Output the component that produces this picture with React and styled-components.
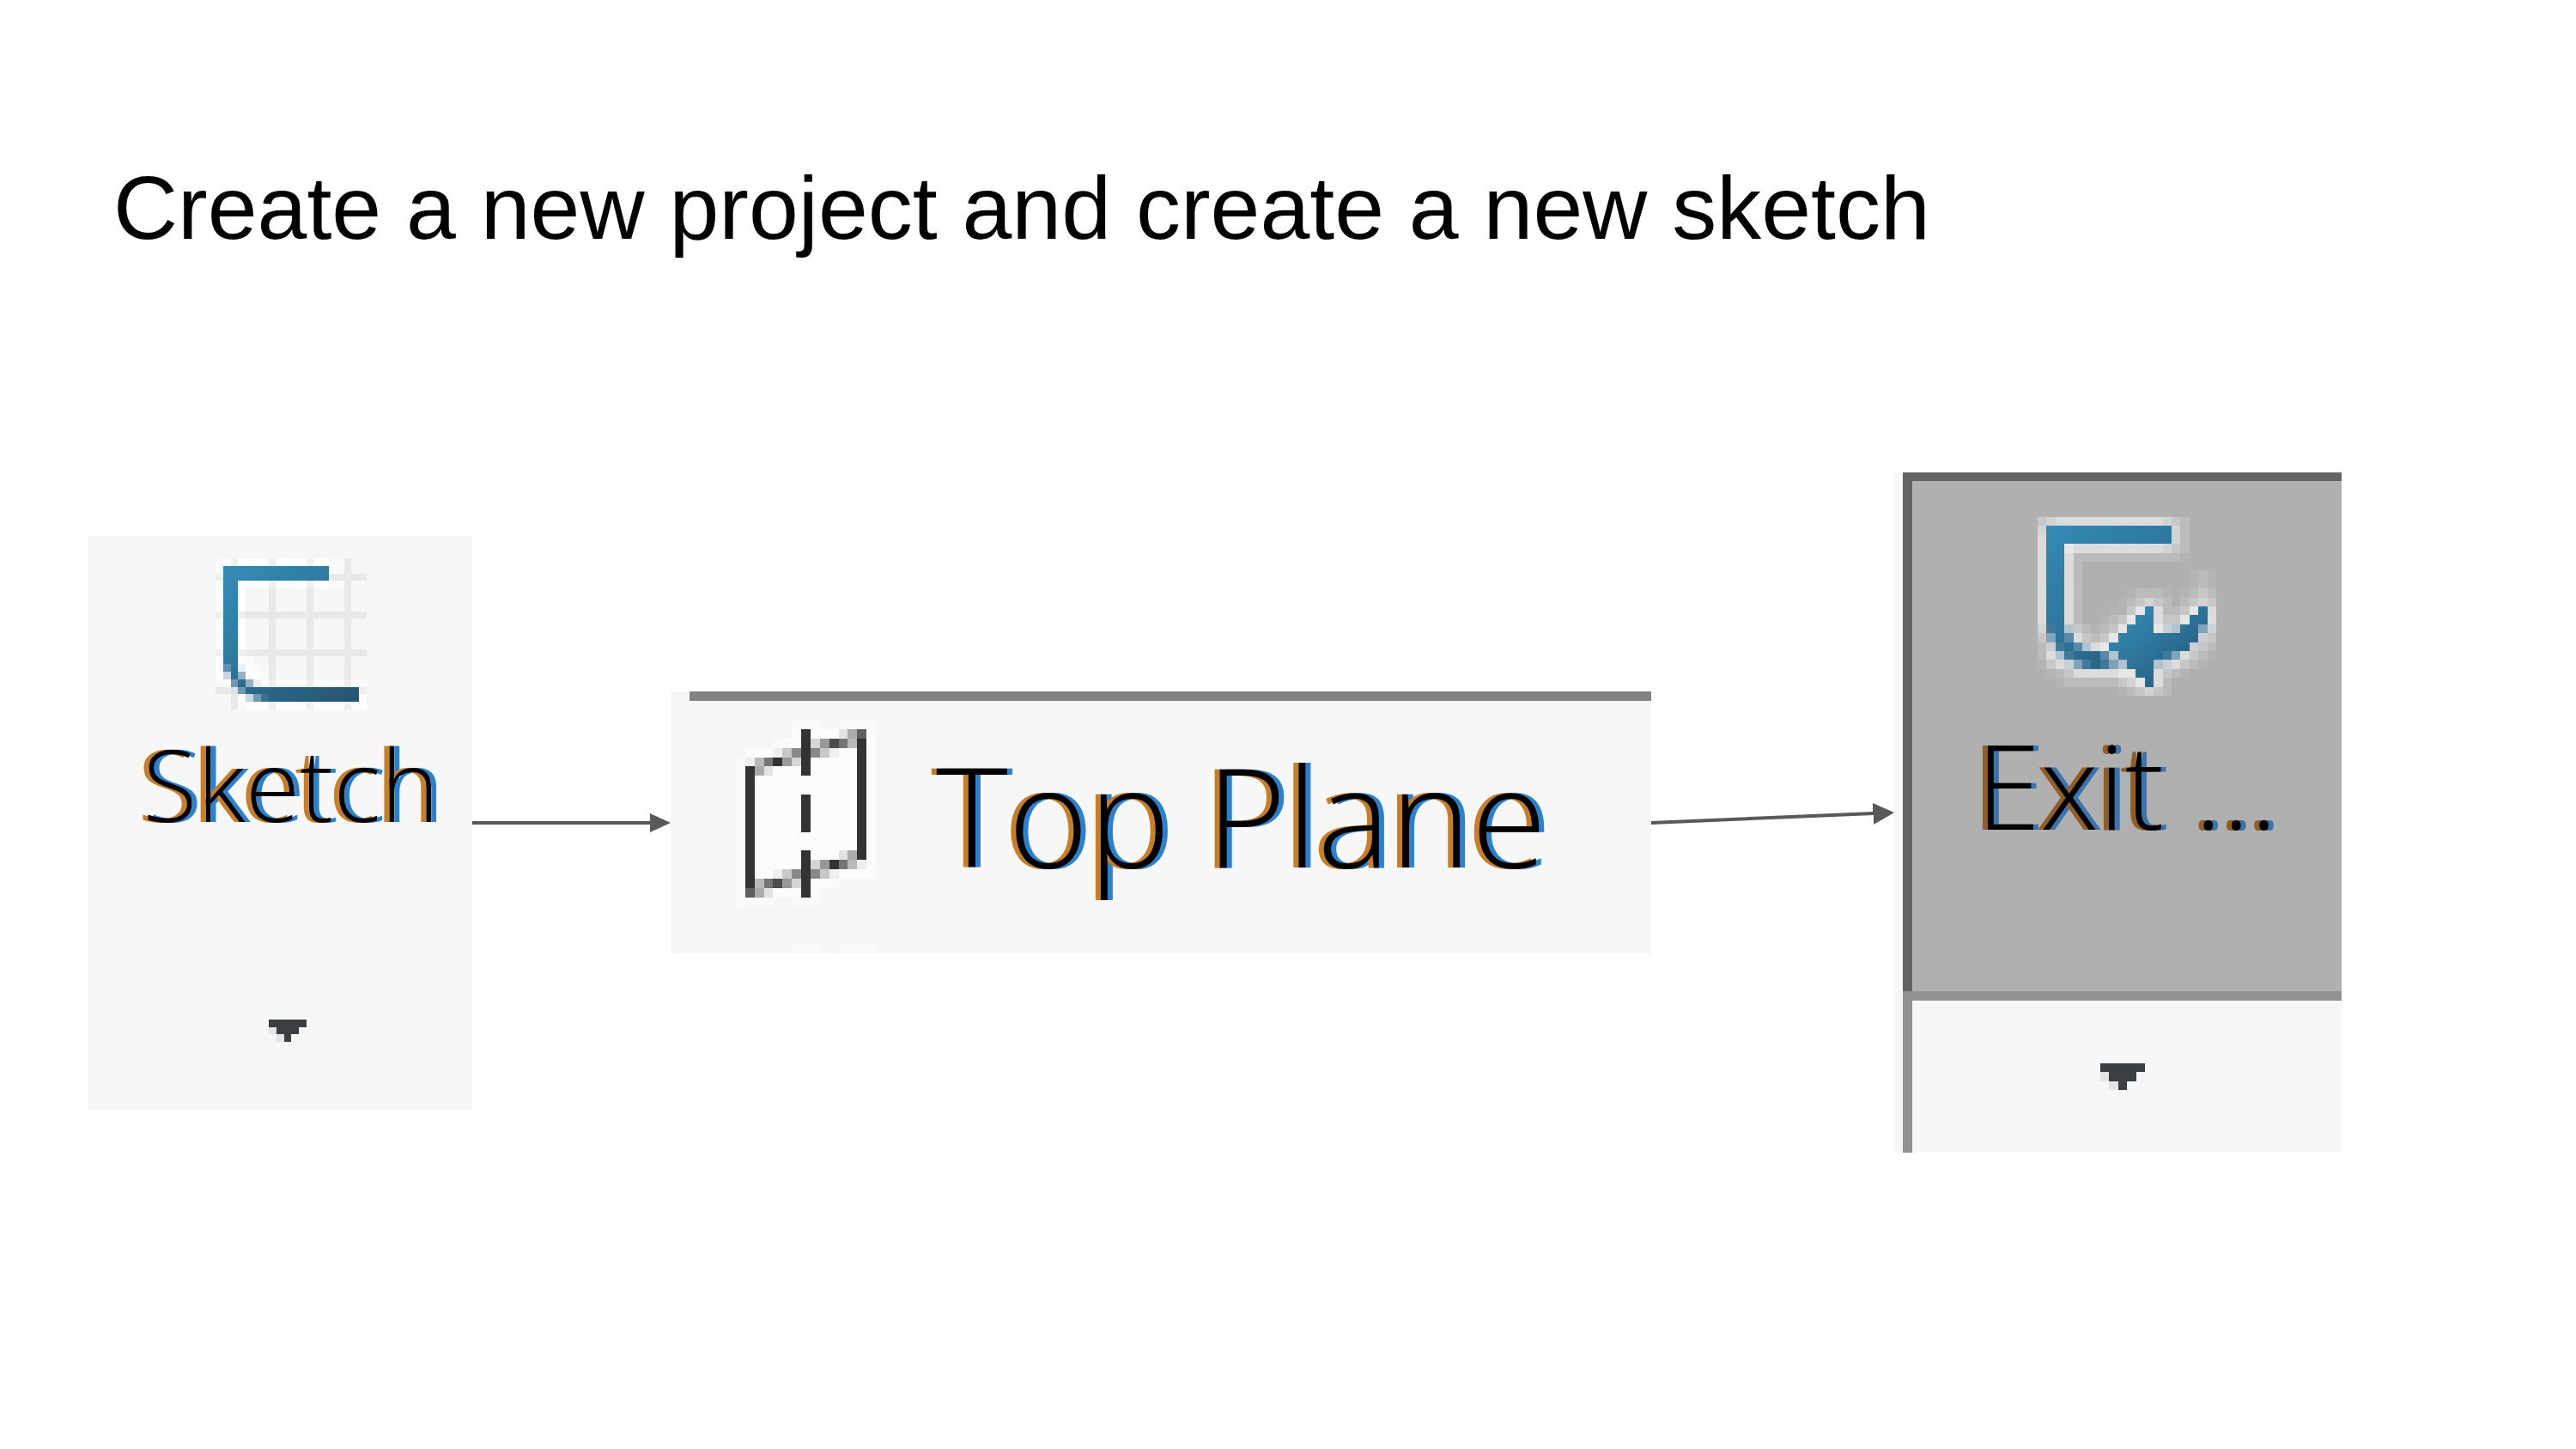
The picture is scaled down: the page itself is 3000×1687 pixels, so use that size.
import React from "react";
import styled, { createGlobalStyle } from "styled-components";

const GlobalStyle = createGlobalStyle`
  body {
    margin: 0;
    background: #ffffff;
    color: #000000;
    font-family: "Liberation Sans", Arial, sans-serif;
  }
  *, *::before, *::after {
    box-sizing: border-box;
  }
`;

const Slide = styled.main`
  padding: 182px 273px 182px 102px;
`;

const Title = styled.h1`
  margin: 0 0 248px;
  padding-left: 30px;
  font-size: 104px;
  line-height: 120px;
  font-weight: 400;
`;

const Steps = styled.div`
  display: flex;
  align-items: center;
`;

const Panel = styled.section`
  display: flex;
  flex-direction: column;
  flex: none;
  width: ${(p) => p.$width}px;
  margin-top: ${(p) => (p.$lowered ? 24 : 0)}px;
  padding-left: ${(p) => p.$inset || 0}px;
  background: #f7f7f7;
`;

const ButtonBase = styled.button`
  margin: 0;
  padding: 0;
  border: 0 solid;
  border-radius: 0;
  background: transparent;
  color: #000000;
  font-family: "Open Sans", "Noto Sans", sans-serif;
  cursor: pointer;
`;

const ToolButton = styled(ButtonBase)`
  display: flex;
  flex-direction: column;
  align-items: center;
  justify-content: flex-start;
  gap: 26px;
  height: 484px;
  padding: 26px 0 0 26px;
`;

const PressedToolButton = styled(ToolButton)`
  gap: 32px;
  height: 604px;
  padding: 42px 0 0;
  border-width: 10px 0 0 11px;
  border-color: #636363;
  background: #b0b0b0;
`;

const MenuButton = styled(ButtonBase)`
  display: flex;
  align-items: center;
  justify-content: center;
  height: 184px;
  padding-left: 18px;
`;

const FramedMenuButton = styled(MenuButton)`
  height: 188px;
  padding: 0 10px 0 0;
  border-width: 11px 0 0 11px;
  border-color: #929292;
`;

const PlaneButton = styled(ButtonBase)`
  display: flex;
  align-items: flex-start;
  gap: 70px;
  height: 306px;
  padding: 22px 0 0 54px;
  border-top-width: 11px;
  border-color: #838383;
`;

const Label = styled.span`
  padding-top: ${(p) => p.$drop || 0}px;
  font-size: ${(p) => p.$size}px;
  line-height: ${(p) => p.$line}px;
  font-weight: 300;
  white-space: nowrap;
  text-shadow: ${(p) =>
    p.$dim
      ? "-6px 0 #925e24, 6px 0 #3a74ac"
      : "-6px 0 #c87e24, 6px 0 #2c80d0"};
`;

const Connector = styled.svg`
  display: block;
  flex: ${(p) => p.$grow} 1 0;
  min-width: 0;
  margin-top: ${(p) => (p.$lowered ? 24 : 0)}px;
  fill: #595959;
  stroke: none;
`;

const Art = styled.svg`
  display: block;
  flex: none;
`;

function PixelArt({ rows, colors, width, height, children }) {
  return (
    <Art
      width={width}
      height={height}
      viewBox={`0 0 ${rows[0].length} ${rows.length}`}
      preserveAspectRatio="none"
      shapeRendering="crispEdges"
      aria-hidden="true"
    >
      {children}
      {rows.flatMap((row, y) => {
        const runs = [];
        let x = 0;
        while (x < row.length) {
          let end = x + 1;
          while (end < row.length && row[end] === row[x]) end += 1;
          if (colors[row[x]]) {
            runs.push(
              <rect key={`${x}-${y}`} x={x} y={y} width={end - x} height={1} fill={colors[row[x]]} />
            );
          }
          x = end;
        }
        return runs;
      })}
    </Art>
  );
}

const sketchRows = [
  "vwgwwwwgwwwwgwwvvG..",
  "w##############wvG..",
  "g##############GGGGG",
  "w##wwwwgwwwwgwwvvG..",
  "w##w...G....G....G..",
  "w##w...G....G....G..",
  "w##w...G....G....G..",
  "g##gGGGGGGGGGGGGGGGG",
  "w##w...G....G....G..",
  "w##w...G....G....G..",
  "w##w...G....G....G..",
  "w##w...G....G....G..",
  "g##gGGGGGGGGGGGGGGGG",
  "w##wv..G....G....G..",
  "ws#ewv.G....G....G..",
  "wp#qwwvG....G....G..",
  "vwr#qewgwwwwgwwwwgwv",
  "GGdr###############g",
  "..Gvprt############w",
  "..Gvwwwgwwwwgwwwwgww",
];

const sketchColors = {
  "#": "url(#sketchStroke)",
  w: "#fefefe",
  v: "#fafafa",
  g: "#efefef",
  G: "#e9e9e9",
  s: "#5b8fab",
  p: "#c8d8e2",
  q: "#93b1c4",
  r: "#6f98b1",
  e: "#eaf0f3",
  d: "#dde3e7",
  t: "#3b7190",
};

const exitRows = [
  "cdeeeeeeeeeeeedcb...",
  "d##############db...",
  "e##############db...",
  "e##feeeeeeeeeedcb...",
  "e##ebbbbbbbbbbbba...",
  "e##eb...............",
  "e##eb............aba",
  "e##eb............aba",
  "e##eb.....abbba.abcb",
  "e##eb....abcdcb.bcdc",
  "e##eb...aacf@ebbcf@e",
  "e##eb..abcf@@eccf@@e",
  "dt#qcbabcf@@@fpq@@rd",
  "cr#secbcf@@@@@@@@@pc",
  "bpt#sqef@@@@@@@@@pcb",
  "beqt###sq@@@@@trecba",
  "aceprt#trq@@@qpecba.",
  ".abceeeeeff@@ecba...",
  "..abbbbbbcdf@eb.....",
  ".........abcdcb.....",
];

const exitColors = {
  "#": "url(#exitStroke)",
  "@": "url(#exitArrow)",
  a: "#b4b4b4",
  b: "#bbbbbb",
  c: "#c7c7c7",
  d: "#d3d3d3",
  e: "#dcdcdc",
  f: "#e6e6e6",
  p: "#c8d0d6",
  q: "#b0c4d0",
  r: "#7fa4b9",
  s: "#5c8aa6",
  t: "#41799a",
};

const planeRows = [
  "......vvv..vvvv",
  "......wKwww951w",
  "....vwwK84k26Kw",
  ".vww073K370wwKw",
  "v062K48KwwwwwKw",
  "vK59wwwKwwwwwKw",
  "vKwwwwwwwwwwwKw",
  "vKwwwwwwwwwwwKw",
  "vKwwwwwKwwwwwKw",
  "vKwwwwwKwwwwwKw",
  "vKwwwwwKwwwwwKw",
  "vKwwwwwKwwwwwKw",
  "vKwwwwwwwwwwwKw",
  "vKwwwwwwwwwwwKw",
  "vKwwwwwKwww95Kw",
  "vKwwwwwK84K260w",
  "vKww073K370wwww",
  "vK62k48Kwwv....",
  "v159wwwKw......",
  "vvvv..vvv......",
  "...............",
  "...............",
  "...............",
  "...............",
  "......vvv..vvvv",
];

const planeColors = {
  K: "#333333",
  k: "#4c4c4c",
  1: "#5f5f5f",
  2: "#757575",
  3: "#888888",
  4: "#999999",
  5: "#ababab",
  6: "#b9b9b9",
  7: "#c8c8c8",
  8: "#d5d5d5",
  9: "#e2e2e2",
  0: "#efefef",
  w: "#fcfcfc",
  v: "#fafafa",
};

const caretRows = ["KKKKK", "lKKK.", ".lK.."];
const caretColors = { K: "#3b3f42", l: "#e3e5e4" };

function SketchIcon() {
  return (
    <PixelArt rows={sketchRows} colors={sketchColors} width={176} height={176}>
      <defs>
        <linearGradient id="sketchStroke" gradientUnits="userSpaceOnUse" x1="2" y1="2" x2="17" y2="20">
          <stop offset="0" stopColor="#348ab3" />
          <stop offset="0.3" stopColor="#2f7ea6" />
          <stop offset="0.6" stopColor="#2a6788" />
          <stop offset="1" stopColor="#275673" />
        </linearGradient>
      </defs>
    </PixelArt>
  );
}

function ExitIcon() {
  return (
    <PixelArt rows={exitRows} colors={exitColors} width={208} height={208}>
      <defs>
        <linearGradient id="exitStroke" gradientUnits="userSpaceOnUse" x1="1" y1="1" x2="12" y2="15">
          <stop offset="0" stopColor="#348ab3" />
          <stop offset="0.5" stopColor="#2e79a1" />
          <stop offset="1" stopColor="#296080" />
        </linearGradient>
        <linearGradient id="exitArrow" gradientUnits="userSpaceOnUse" x1="10" y1="11" x2="16" y2="18">
          <stop offset="0" stopColor="#3387b0" />
          <stop offset="0.5" stopColor="#2d739a" />
          <stop offset="1" stopColor="#295f7e" />
        </linearGradient>
      </defs>
    </PixelArt>
  );
}

export default function App() {
  return (
    <>
      <GlobalStyle />
      <Slide>
        <Title>Create a new project and create a new sketch</Title>
        <Steps>
          <Panel $width={448} $lowered>
            <ToolButton type="button">
              <SketchIcon />
              <Label $size={116} $line={120}>Sketch</Label>
            </ToolButton>
            <MenuButton type="button" aria-label="Sketch options">
              <PixelArt rows={caretRows} colors={caretColors} width={44} height={26} />
            </MenuButton>
          </Panel>

          <Connector $grow={231} $lowered viewBox="0 0 231 24" aria-hidden="true">
            <path d="M0 10H207V1L231 12L207 23V14H0Z" />
          </Connector>

          <Panel $width={1142} $inset={22} $lowered>
            <PlaneButton type="button">
              <PixelArt rows={planeRows} colors={planeColors} width={163} height={272} />
              <Label $size={160} $line={160} $drop={30}>Top Plane</Label>
            </PlaneButton>
          </Panel>

          <Connector $grow={283} viewBox="0 0 283 28" aria-hidden="true">
            <path d="M0 24L258 13V3L283 14L259 28V17L0 28Z" />
          </Connector>

          <Panel $width={521} $inset={10}>
            <PressedToolButton type="button" aria-pressed="true">
              <ExitIcon />
              <Label $size={136} $line={144} $dim>Exit ...</Label>
            </PressedToolButton>
            <FramedMenuButton type="button" aria-label="Exit options">
              <PixelArt rows={caretRows} colors={caretColors} width={52} height={31} />
            </FramedMenuButton>
          </Panel>
        </Steps>
      </Slide>
    </>
  );
}
